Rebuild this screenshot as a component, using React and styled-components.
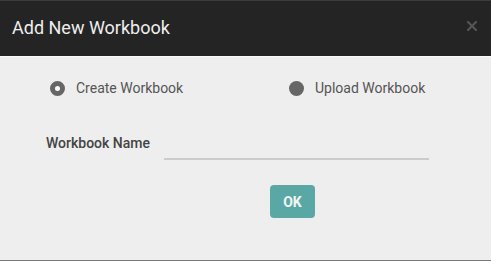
import React, { useState } from 'react';
import styled, { createGlobalStyle } from 'styled-components';

const GlobalStyle = createGlobalStyle`
    html, body {
        margin: 0;
        padding: 0;
        background: #eeeeee;
    }
    * {
        box-sizing: border-box;
    }
`;

function App() {
    const [mode, setMode] = useState('create');
    const [name, setName] = useState('');

    return (
        <>
            <GlobalStyle />
            <ModalStyled>
                <Header>
                    <h2>Add New Workbook</h2>
                    <CloseButton aria-label="Close">
                        <svg width="10" height="10" viewBox="0 0 10 10">
                            <path d="M1 1 L9 9 M9 1 L1 9" stroke="#555" strokeWidth="2.2" strokeLinecap="square" />
                        </svg>
                    </CloseButton>
                </Header>

                <Body>
                    <RadioRow>
                        <RadioOption onClick={() => setMode('create')}>
                            <RadioDot $checked={mode === 'create'} />
                            Create Workbook
                        </RadioOption>
                        <RadioOption onClick={() => setMode('upload')}>
                            <RadioDot $checked={mode === 'upload'} />
                            Upload Workbook
                        </RadioOption>
                    </RadioRow>

                    <FieldRow>
                        <label htmlFor="wb-name">Workbook Name</label>
                        <NameInput
                            id="wb-name"
                            value={name}
                            onChange={(e) => setName(e.target.value)}
                        />
                    </FieldRow>

                    <Actions>
                        <OkButton>OK</OkButton>
                    </Actions>
                </Body>
            </ModalStyled>
        </>
    );
}

const ModalStyled = styled.div`
    width: 491px;
    height: 261px;
    display: flex;
    flex-direction: column;
    background: #eeeeee;
    border-bottom: 1px solid #7a7a7a;
    font-family: Roboto, "Liberation Sans", sans-serif;
`;

const Header = styled.div`
    height: 57px;
    background: #242424;
    border-top: 1px solid #3c3c3c;
    border-bottom: 1px solid #fafafa;
    display: flex;
    align-items: center;
    justify-content: space-between;
    padding: 0 14px 0 12px;

    h2 {
        margin: 0;
        font-size: 18px;
        font-weight: 400;
        color: #eeeeee;
        padding-bottom: 2px;
    }
`;

const CloseButton = styled.button`
    background: none;
    border: none;
    padding: 0;
    display: flex;
    cursor: pointer;
    margin-bottom: 6px;
`;

const Body = styled.div`
    flex: 1;
    display: flex;
    flex-direction: column;
    padding: 21px 0 0 50px;
`;

const RadioRow = styled.div`
    display: grid;
    grid-template-columns: 239px auto;
    align-items: center;
    height: 20px;
`;

const RadioOption = styled.div`
    display: flex;
    align-items: center;
    gap: 11px;
    font-size: 14px;
    color: #555555;
    cursor: pointer;
`;

const RadioDot = styled.span`
    width: 15px;
    height: 15px;
    border-radius: 50%;
    flex-shrink: 0;
    background: ${({ $checked }) => ($checked ? '#ffffff' : '#666666')};
    border: ${({ $checked }) => ($checked ? '5px solid #666666' : 'none')};
`;

const FieldRow = styled.div`
    display: flex;
    align-items: flex-end;
    margin-top: 32px;
    margin-left: -4px;

    label {
        width: 118px;
        font-size: 14px;
        font-weight: 500;
        color: #444444;
        padding-bottom: 9px;
    }
`;

const NameInput = styled.input`
    width: 265px;
    height: 30px;
    border: none;
    border-bottom: 2px solid #cccccc;
    background: transparent;
    outline: none;
    font-family: inherit;
    font-size: 14px;
    color: #444444;
`;

const Actions = styled.div`
    display: flex;
    justify-content: flex-start;
    padding-left: 220px;
    margin-top: 25px;
`;

const OkButton = styled.button`
    width: 45px;
    height: 33px;
    background: #5aa8a5;
    border: none;
    border-radius: 4px;
    color: #f4f4f4;
    font-family: inherit;
    font-size: 14px;
    font-weight: 700;
    cursor: pointer;
`;

export default App;
